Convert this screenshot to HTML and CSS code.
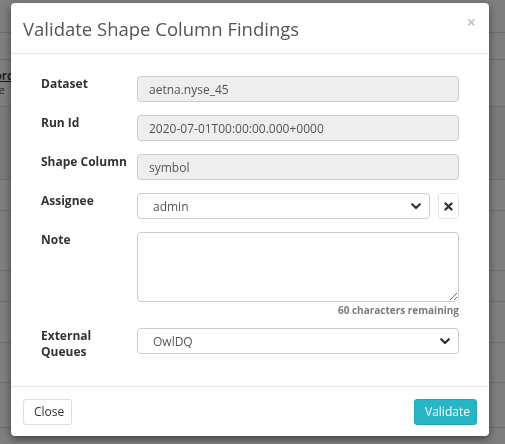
FILE: index.html
```html
<!DOCTYPE html>
<html>
<head>
<meta charset="utf-8">
<link rel="stylesheet" href="styles.css">
</head>
<body>
<div class="page">
  <div class="bg-row r1"></div>
  <div class="bg-row r2"></div>
  <div class="bg-row r3"><span class="bg-text">Record</span><span class="bg-sub">Score</span></div>
  <div class="bg-row r4"></div>
  <div class="bg-row r5"></div>
  <div class="bg-row r6"></div>
  <div class="bg-row r7"></div>
  <div class="bg-row r8"></div>
  <div class="bg-row r9"></div>
  <div class="bg-row r10"></div>
</div>
<div class="backdrop"></div>
<div class="modal">
  <div class="modal-header">
    <h4 class="modal-title">Validate Shape Column Findings</h4>
    <button class="close" type="button">&times;</button>
  </div>
  <div class="modal-body">
    <div class="form-row">
      <label class="lbl">Dataset</label>
      <div class="field"><input class="ctl" type="text" value="aetna.nyse_45" disabled></div>
    </div>
    <div class="form-row">
      <label class="lbl">Run Id</label>
      <div class="field"><input class="ctl" type="text" value="2020-07-01T00:00:00.000+0000" disabled></div>
    </div>
    <div class="form-row">
      <label class="lbl">Shape Column</label>
      <div class="field"><input class="ctl" type="text" value="symbol" disabled></div>
    </div>
    <div class="form-row">
      <label class="lbl">Assignee</label>
      <div class="field field-inline">
        <div class="select-wrap">
          <select class="ctl sel"><option>admin</option></select>
          <svg class="chev" width="10" height="7" viewBox="0 0 10 7"><path d="M1.2 1.2 L5 5 L8.8 1.2" fill="none" stroke="#333" stroke-width="2.2" stroke-linecap="round" stroke-linejoin="round"/></svg>
        </div>
        <button class="xbtn" type="button"><svg width="9" height="9" viewBox="0 0 9 9"><path d="M1.5 1.5 L7.5 7.5 M7.5 1.5 L1.5 7.5" stroke="#333" stroke-width="2.4" stroke-linecap="round"/></svg></button>
      </div>
    </div>
    <div class="form-row note-row">
      <label class="lbl">Note</label>
      <div class="field">
        <textarea class="ctl note"></textarea>
        <div class="remain">60 characters remaining</div>
      </div>
    </div>
    <div class="form-row">
      <label class="lbl">External Queues</label>
      <div class="field">
        <div class="select-wrap">
          <select class="ctl sel"><option>OwlDQ</option></select>
          <svg class="chev" width="10" height="7" viewBox="0 0 10 7"><path d="M1.2 1.2 L5 5 L8.8 1.2" fill="none" stroke="#333" stroke-width="2.2" stroke-linecap="round" stroke-linejoin="round"/></svg>
        </div>
      </div>
    </div>
  </div>
  <div class="modal-footer">
    <button class="btn btn-default" type="button">Close</button>
    <button class="btn btn-info" type="button">Validate</button>
  </div>
</div>
</body>
</html>
```
FILE: styles.css
```css
* { box-sizing: border-box; }
html, body { margin: 0; padding: 0; }
body {
  width: 505px;
  height: 444px;
  overflow: hidden;
  font-family: "Open Sans", "Noto Sans", sans-serif;
  background: #fff;
}
.page {
  display: flex;
  flex-direction: column;
  height: 444px;
}
.bg-row { border-bottom: 1px solid #dedede; background: #fff; }
.r1 { height: 33px; }
.r2 { height: 27px; }
.r3 { height: 47px; }
.r4 { height: 73px; background: #f6f6f6; }
.r5 { height: 31px; }
.r6 { height: 60px; }
.r7 { height: 31px; }
.r8 { height: 41px; }
.r9 { height: 40px; }
.r10 { height: 45px; }
.bg-text {
  display: block;
  margin-left: -26px;
  margin-top: 9px;
  font-size: 12px;
  line-height: 14px;
  font-weight: 600;
  color: #333;
  text-decoration: underline;
}
.bg-sub {
  display: block;
  margin-left: -24px;
  font-size: 11px;
  line-height: 13px;
  color: #555;
}
.backdrop {
  position: fixed;
  inset: 0;
  background: rgba(0,0,0,0.5);
}
.modal {
  position: fixed;
  left: 11px;
  top: 3px;
  width: 478px;
  height: 433px;
  background: #fff;
  border-radius: 4px;
  box-shadow: 0 3px 9px rgba(0,0,0,0.5);
  display: flex;
  flex-direction: column;
}
.modal-header {
  height: 51px;
  border-bottom: 1px solid #e5e5e5;
  display: flex;
  align-items: flex-start;
  justify-content: space-between;
  padding: 0 12px;
}
.modal-title {
  margin: 13px 0 0 0;
  font-size: 18.5px;
  font-weight: 400;
  color: #555;
  line-height: 26px;
}
.close {
  border: 0;
  background: none;
  padding: 0;
  margin-top: 9px;
  margin-right: 1px;
  font-size: 16px;
  font-weight: 700;
  color: #c4c4c4;
  line-height: 20px;
  font-family: "Open Sans", sans-serif;
}
.modal-body {
  flex: 1;
  padding: 22px 30px 0 30px;
  display: flex;
  flex-direction: column;
  gap: 13px;
}
.form-row {
  display: grid;
  grid-template-columns: 96px 1fr;
  align-items: start;
}
.lbl {
  font-size: 12px;
  font-weight: 700;
  color: #333;
  line-height: 16px;
  padding-top: 0px;
  padding-right: 6px;
}
.field { position: relative; }
.field-inline { display: flex; gap: 8px; }
.ctl {
  display: block;
  width: 100%;
  height: 26px;
  border: 1px solid #ccc;
  border-radius: 4px;
  background: #fff;
  font-family: "Open Sans", sans-serif;
  font-size: 12px;
  color: #555;
  padding: 0 11px;
  margin: 0;
  outline: none;
}
.ctl:disabled { background: #eee; color: #555; }
.select-wrap { position: relative; flex: 1; }
.sel { appearance: none; -webkit-appearance: none; padding-left: 15px; }
.chev { position: absolute; right: 9px; top: 10px; }
.xbtn {
  width: 21px;
  height: 26px;
  flex: none;
  border: 1px solid #e4e4e4;
  border-radius: 3px;
  background: #fff;
  padding: 0;
  display: flex;
  align-items: center;
  justify-content: center;
}
.note { height: 70px; resize: vertical; padding: 6px 11px; }
.remain {
  text-align: right;
  font-size: 10px;
  font-weight: 700;
  color: #7a7a7a;
  line-height: 14px;
  margin-top: 1px;
}
.note-row { margin-bottom: -2px; }
.modal-footer {
  height: 50px;
  border-top: 1px solid #e5e5e5;
  display: flex;
  justify-content: space-between;
  align-items: center;
  padding: 0 12px;
}
.btn {
  height: 26px;
  border-radius: 3px;
  font-family: "Open Sans", sans-serif;
  font-size: 12px;
  padding: 0 10px;
  line-height: 24px;
}
.btn-default { background: #fff; border: 1px solid #ddd; color: #333; width: 49px; }
.btn-info { background: #27b6c6; border: 1px solid #1fa9b8; color: #fff; width: 63px; }
```
